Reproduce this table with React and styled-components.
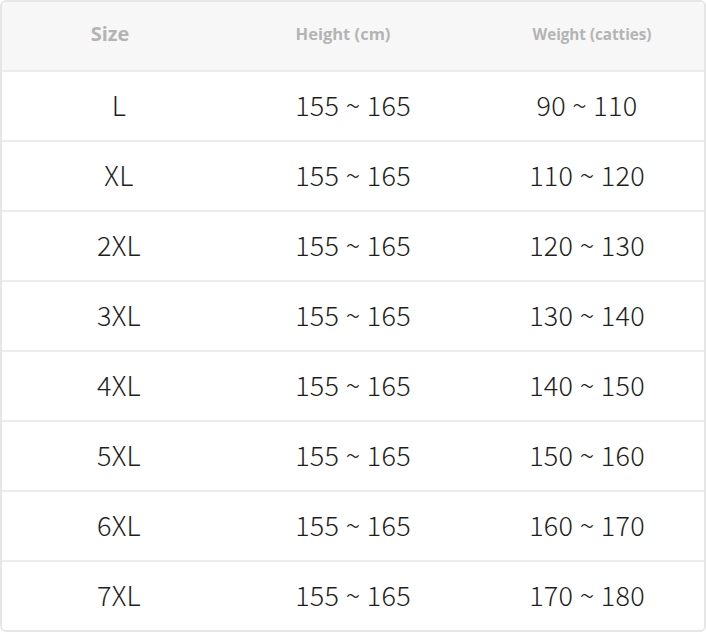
import React from "react";
import styled, { createGlobalStyle } from "styled-components";

const GlobalStyle = createGlobalStyle`
  html, body {
    margin: 0;
    padding: 0;
    background: #ffffff;
  }
`;

const Table = styled.div`
  width: 706px;
  height: 632px;
  box-sizing: border-box;
  border: 2px solid #e6e6e6;
  border-radius: 6px;
  overflow: hidden;
  background: #ffffff;
  display: flex;
  flex-direction: column;
`;

const Row = styled.div`
  display: grid;
  grid-template-columns: repeat(3, 1fr);
  align-items: center;
  box-sizing: border-box;
  height: ${(props) => (props.last ? "68px" : "70px")};
  border-bottom: ${(props) => (props.last ? "none" : "2px solid #ececec")};
  background: ${(props) => (props.head ? "#f7f7f7" : "#ffffff")};
`;

const HeadCell = styled.div`
  text-align: center;
  font-family: "Open Sans", "Noto Sans", sans-serif;
  font-weight: 700;
  color: #b4b4b4;
  font-size: ${(props) => props.size}px;
  transform: translateX(${(props) => props.shift}px);
  margin-top: -5px;
`;

const Cell = styled.div`
  text-align: center;
  font-family: "Noto Sans CJK SC", "Noto Sans", sans-serif;
  font-weight: 300;
  font-size: 27px;
  color: #1e1e1e;
  letter-spacing: 0.3px;
  margin-top: -4px;
`;

const rows = [
  ["L", "155 ~ 165", "90 ~ 110"],
  ["XL", "155 ~ 165", "110 ~ 120"],
  ["2XL", "155 ~ 165", "120 ~ 130"],
  ["3XL", "155 ~ 165", "130 ~ 140"],
  ["4XL", "155 ~ 165", "140 ~ 150"],
  ["5XL", "155 ~ 165", "150 ~ 160"],
  ["6XL", "155 ~ 165", "160 ~ 170"],
  ["7XL", "155 ~ 165", "170 ~ 180"],
];

const App = () => {
  return (
    <>
      <GlobalStyle />
      <Table>
        <Row head>
          <HeadCell size={20} shift={-9}>Size</HeadCell>
          <HeadCell size={16.5} shift={-10}>Height (cm)</HeadCell>
          <HeadCell size={15.2} shift={5}>Weight (catties)</HeadCell>
        </Row>
        {rows.map((r, i) => (
          <Row key={r[0]} last={i === rows.length - 1}>
            <Cell>{r[0]}</Cell>
            <Cell>{r[1]}</Cell>
            <Cell>{r[2]}</Cell>
          </Row>
        ))}
      </Table>
    </>
  );
};

export default App;
